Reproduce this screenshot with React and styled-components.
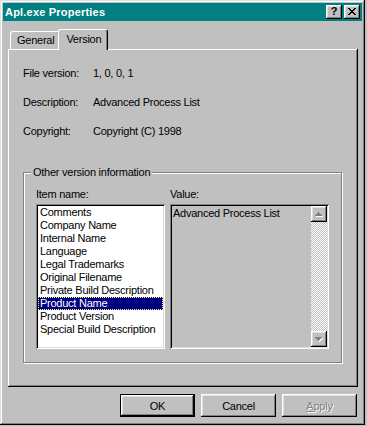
import React from "react";
import styled, { createGlobalStyle, css } from "styled-components";

const GlobalStyle = createGlobalStyle`
  html, body {
    margin: 0;
    padding: 0;
    background: #c0c0c0;
  }
  body {
    font-family: "Liberation Sans", Arial, sans-serif;
    font-size: 11px;
    letter-spacing: -0.25px;
    color: #000;
  }
`;

const raised = css`
  box-shadow: inset -1px -1px #000, inset 1px 1px #fff, inset -2px -2px #808080,
    inset 2px 2px #dfdfdf;
`;

const sunken = css`
  box-shadow: inset 1px 1px #808080, inset -1px -1px #fff, inset 2px 2px #000,
    inset -2px -2px #dfdfdf;
`;

const Window = styled.div`
  box-sizing: border-box;
  width: 365px;
  height: 425px;
  padding: 3px;
  background: #c0c0c0;
  box-shadow: inset -1px -1px #000, inset 1px 1px #dfdfdf, inset -2px -2px #808080,
    inset 2px 2px #fff;
  display: flex;
  flex-direction: column;
`;

const TitleBar = styled.div`
  height: 18px;
  background: #008080;
  color: #fff;
  display: flex;
  align-items: center;
  padding: 0 2px 0 2px;
  font-weight: bold;
`;

const Title = styled.div`
  flex: 1;
  letter-spacing: 0.2px;
`;

const TitleButton = styled.div`
  box-sizing: border-box;
  width: 16px;
  height: 14px;
  background: #c0c0c0;
  color: #000;
  ${raised};
  display: flex;
  align-items: center;
  justify-content: center;
  margin-left: ${(p) => (p.$gap ? "2px" : "0")};
  font-weight: bold;
  font-size: 11px;
  line-height: 11px;
  letter-spacing: 0;
  padding-bottom: 1px;
`;

const Body = styled.div`
  padding: 8px 4px 0 5px;
  display: flex;
  flex-direction: column;
`;

const TabStrip = styled.div`
  height: 20px;
  display: flex;
  align-items: flex-end;
  padding-left: 2px;
  position: relative;
  z-index: 1;
`;

const Tab = styled.div`
  box-sizing: border-box;
  height: ${(p) => (p.$active ? "21px" : "18px")};
  margin: ${(p) => (p.$active ? "0 -2px -1px -2px" : "0 0 0 0")};
  padding: ${(p) => (p.$active ? "2px 6px 0 7px" : "1px 5px 0 6px")};
  background: #c0c0c0;
  border-left: 1px solid #fff;
  border-top: 1px solid #fff;
  border-right: 1px solid #000;
  border-radius: 3px 3px 0 0;
  box-shadow: inset -1px 0 #808080;
  line-height: 14px;
  position: relative;
  z-index: ${(p) => (p.$active ? 2 : 1)};
`;

const Panel = styled.div`
  box-sizing: border-box;
  height: 338px;
  padding: 18px 16px 0 15px;
  box-shadow: inset -1px -1px #000, inset 1px 1px #fff, inset -2px -2px #808080;
  display: flex;
  flex-direction: column;
`;

const InfoRow = styled.div`
  display: grid;
  grid-template-columns: 70px 1fr;
  height: 13px;
  line-height: 13px;
  margin-bottom: 16px;
`;

const Group = styled.div`
  position: relative;
  box-sizing: border-box;
  margin-top: 18px;
  height: 191px;
  border: 1px solid #808080;
  box-shadow: inset 1px 1px #fff, 1px 1px #fff;
  padding: 15px 12px 0 12px;
`;

const GroupLabel = styled.div`
  position: absolute;
  top: -7px;
  left: 7px;
  padding: 0 2px;
  background: #c0c0c0;
  line-height: 13px;
`;

const Columns = styled.div`
  display: grid;
  grid-template-columns: 129px 159px;
  column-gap: 5px;
`;

const Column = styled.div`
  display: flex;
  flex-direction: column;
`;

const FieldLabel = styled.div`
  line-height: 13px;
  height: 13px;
  margin-bottom: 3px;
`;

const ListBox = styled.div`
  box-sizing: border-box;
  height: 145px;
  padding: 2px;
  background: #fff;
  ${sunken};
`;

const ListItem = styled.div`
  height: 13px;
  line-height: 13px;
  padding-left: 2px;
  white-space: nowrap;
  ${(p) =>
    p.$selected &&
    css`
      background: #000080;
      color: #fff;
      outline: 1px dotted #ffff80;
      outline-offset: -1px;
    `}
`;

const ValueBox = styled.div`
  box-sizing: border-box;
  height: 145px;
  padding: 2px;
  background: #c0c0c0;
  ${sunken};
  display: flex;
`;

const ValueText = styled.div`
  flex: 1;
  padding: 1px 1px;
  line-height: 13px;
  white-space: nowrap;
`;

const ScrollBar = styled.div`
  width: 16px;
  display: flex;
  flex-direction: column;
`;

const ArrowButton = styled.div`
  box-sizing: border-box;
  width: 16px;
  height: 16px;
  background: #c0c0c0;
  ${raised};
  display: flex;
  align-items: center;
  justify-content: center;
`;

const Track = styled.div`
  flex: 1;
  background: repeating-conic-gradient(#fff 0 25%, #c0c0c0 0 50%) 0 0 / 2px 2px;
`;

const ButtonRow = styled.div`
  margin-top: 7px;
  display: flex;
  justify-content: flex-end;
  gap: 6px;
  padding-right: 1px;
`;

const Button = styled.div`
  box-sizing: border-box;
  width: 75px;
  height: 23px;
  background: #c0c0c0;
  display: flex;
  align-items: center;
  justify-content: center;
  ${(p) =>
    p.$default
      ? css`
          box-shadow: inset 0 0 0 1px #000, inset -2px -2px #000, inset 2px 2px #fff,
            inset -3px -3px #808080, inset 3px 3px #dfdfdf;
        `
      : raised};
  ${(p) =>
    p.$disabled &&
    css`
      color: #808080;
      text-shadow: 1px 1px 0 #fff;
    `}
`;

const CloseIcon = () => (
  <svg width="8" height="7" viewBox="0 0 8 7" shapeRendering="crispEdges">
    <path
      fill="#000"
      d="M0 0h2v1H0zM6 0h2v1H6zM1 1h2v1H1zM5 1h2v1H5zM2 2h4v1H2zM3 3h2v1H3zM2 4h4v1H2zM1 5h2v1H1zM5 5h2v1H5zM0 6h2v1H0zM6 6h2v1H6z"
    />
  </svg>
);

const Arrow = ({ up }) => (
  <svg width="8" height="5" viewBox="0 0 8 5" shapeRendering="crispEdges">
    {up ? (
      <>
        <path fill="#fff" d="M4 1h1v1H4zM3 2h3v1H3zM2 3h5v1H2zM1 4h7v1H1z" />
        <path fill="#808080" d="M3 0h1v1H3zM2 1h3v1H2zM1 2h5v1H1zM0 3h7v1H0z" />
      </>
    ) : (
      <>
        <path fill="#fff" d="M1 1h7v1H1zM2 2h5v1H2zM3 3h3v1H3zM4 4h1v1H4z" />
        <path fill="#808080" d="M0 0h7v1H0zM1 1h5v1H1zM2 2h3v1H2zM3 3h1v1H3z" />
      </>
    )}
  </svg>
);

const items = [
  "Comments",
  "Company Name",
  "Internal Name",
  "Language",
  "Legal Trademarks",
  "Original Filename",
  "Private Build Description",
  "Product Name",
  "Product Version",
  "Special Build Description",
];

const info = [
  ["File version:", "1, 0, 0, 1"],
  ["Description:", "Advanced Process List"],
  ["Copyright:", "Copyright (C) 1998"],
];

export default function App() {
  return (
    <>
      <GlobalStyle />
      <Window>
        <TitleBar>
          <Title>Apl.exe Properties</Title>
          <TitleButton>?</TitleButton>
          <TitleButton $gap>
            <CloseIcon />
          </TitleButton>
        </TitleBar>
        <Body>
          <TabStrip>
            <Tab>General</Tab>
            <Tab $active>Version</Tab>
          </TabStrip>
          <Panel>
            {info.map(([label, value]) => (
              <InfoRow key={label}>
                <span>{label}</span>
                <span>{value}</span>
              </InfoRow>
            ))}
            <Group>
              <GroupLabel>Other version information</GroupLabel>
              <Columns>
                <Column>
                  <FieldLabel>Item name:</FieldLabel>
                  <ListBox>
                    {items.map((it) => (
                      <ListItem key={it} $selected={it === "Product Name"}>
                        {it}
                      </ListItem>
                    ))}
                  </ListBox>
                </Column>
                <Column>
                  <FieldLabel>Value:</FieldLabel>
                  <ValueBox>
                    <ValueText>Advanced Process List</ValueText>
                    <ScrollBar>
                      <ArrowButton>
                        <Arrow up />
                      </ArrowButton>
                      <Track />
                      <ArrowButton>
                        <Arrow />
                      </ArrowButton>
                    </ScrollBar>
                  </ValueBox>
                </Column>
              </Columns>
            </Group>
          </Panel>
          <ButtonRow>
            <Button $default>OK</Button>
            <Button>Cancel</Button>
            <Button $disabled>
              <span>
                <u>A</u>pply
              </span>
            </Button>
          </ButtonRow>
        </Body>
      </Window>
    </>
  );
}
